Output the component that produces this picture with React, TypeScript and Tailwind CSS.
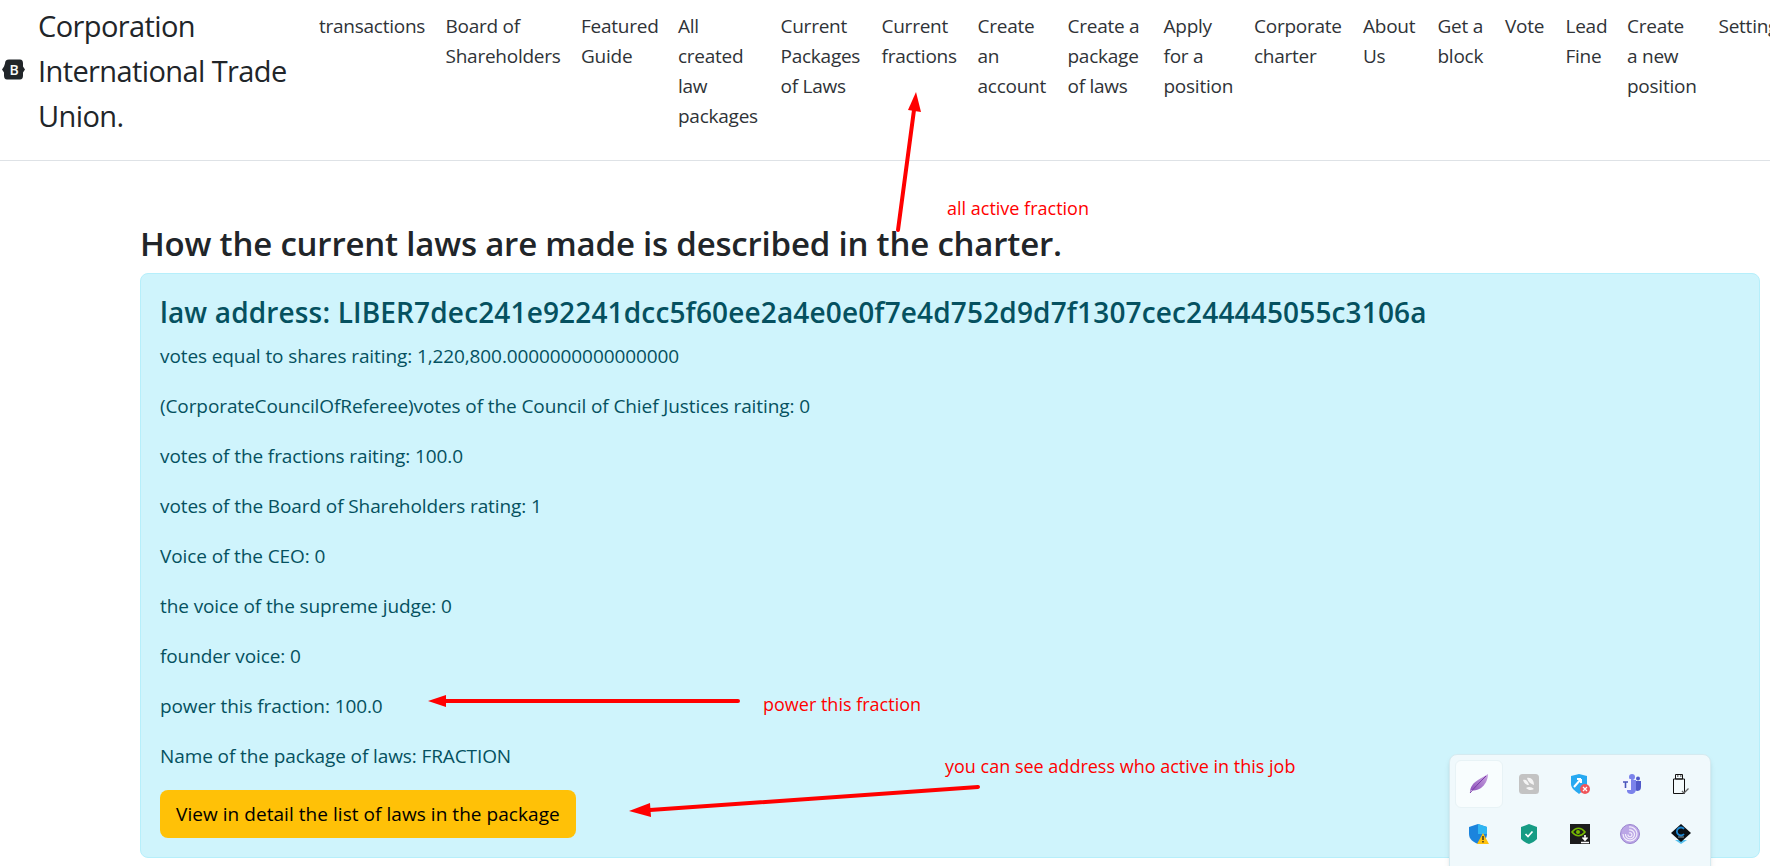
import React from "react";

const navLinks = [
  { lines: ["transactions"], width: "w-[106.5px]" },
  { lines: ["Board of", "Shareholders"], width: "w-[115.5px]" },
  { lines: ["Featured", "Guide"], width: "w-[77px]" },
  { lines: ["All", "created", "law", "packages"], width: "w-[82.5px]" },
  { lines: ["Current", "Packages", "of Laws"], width: "w-[81px]" },
  { lines: ["Current", "fractions"], width: "w-[76px]" },
  { lines: ["Create", "an", "account"], width: "w-[70px]" },
  { lines: ["Create a", "package", "of laws"], width: "w-[76px]" },
  { lines: ["Apply", "for a", "position"], width: "w-[70.5px]" },
  { lines: ["Corporate", "charter"], width: "w-[89px]" },
  { lines: ["About", "Us"], width: "w-[54.5px]" },
  { lines: ["Get a", "block"], width: "w-[47.5px]" },
  { lines: ["Vote"], width: "w-[40.5px]" },
  { lines: ["Lead", "Fine"], width: "w-[41.5px]" },
  { lines: ["Create", "a new", "position"], width: "w-[71.5px]" },
  { lines: ["Settings"], width: "w-[80px]" },
];

const rows = [
  "votes equal to shares raiting: 1,220,800.0000000000000000",
  "(CorporateCouncilOfReferee)votes of the Council of Chief Justices raiting: 0",
  "votes of the fractions raiting: 100.0",
  "votes of the Board of Shareholders rating: 1",
  "Voice of the CEO: 0",
  "the voice of the supreme judge: 0",
  "founder voice: 0",
  "power this fraction: 100.0",
  "Name of the package of laws: FRACTION",
];

function Arrows() {
  return (
    <svg className="absolute left-0 top-0 pointer-events-none" width="1770" height="866">
      <g stroke="#ff0000" strokeWidth="4" strokeLinecap="round">
        <line x1="898" y1="230" x2="914" y2="110" />
        <line x1="738" y1="701" x2="445" y2="701" />
        <line x1="978" y1="787" x2="650" y2="810" />
      </g>
      <g fill="#ff0000">
        <polygon points="916,92 921,112 908,110" />
        <polygon points="428,701 446,695 446,707" />
        <polygon points="629,811 650,803 651,817" />
      </g>
    </svg>
  );
}

function TrayIcons() {
  return (
    <div className="grid grid-cols-5 gap-[2px]">
      <div className="w-12 h-12 flex items-center justify-center rounded-md bg-[#f8fdfe] border border-[#e8f3f6]">
        <svg width="20" height="20" viewBox="0 0 20 20">
          <defs>
            <linearGradient id="feather" x1="0" y1="1" x2="1" y2="0">
              <stop offset="0" stopColor="#8a4bb8" />
              <stop offset="1" stopColor="#c9a6e0" />
            </linearGradient>
          </defs>
          <path d="M1 19 C1 13 4 9 9 6 C12 4 16 2 19 0 C19 6 16 11 12 14 C9 16 5 17 2 16 Z" fill="url(#feather)" />
          <path d="M1 19 C5 14 10 9 17 2" stroke="#7a3aa8" strokeWidth="1" fill="none" />
        </svg>
      </div>
      <div className="w-12 h-12 flex items-center justify-center">
        <svg width="20" height="20" viewBox="0 0 20 20">
          <rect width="20" height="20" rx="3.5" fill="#c3c3c3" />
          <path d="M4 6 C7 5 9 7 10 11 C7 11 5 9 4 6 Z M8 4 C12 3 15 6 15 11 C12 10 9 8 8 4 Z M7 14 C10 12 13 13 15 15 C12 17 9 16 7 14 Z" fill="#f4f4f4" />
        </svg>
      </div>
      <div className="w-12 h-12 flex items-center justify-center">
        <svg width="20" height="20" viewBox="0 0 20 20">
          <path d="M1 2 L9 0 L17 2 V10 C17 14 13 17 9 20 C5 17 1 14 1 10 Z" fill="#27a9f1" />
          <path d="M4 13 L11 5 M11 5 H7 M11 5 V9" stroke="#fff" strokeWidth="2" fill="none" />
          <circle cx="15" cy="15" r="5" fill="#f0565a" />
          <path d="M13 13 L17 17 M17 13 L13 17" stroke="#fff" strokeWidth="1.2" />
        </svg>
      </div>
      <div className="w-12 h-12 flex items-center justify-center">
        <svg width="21" height="20" viewBox="0 0 21 20">
          <circle cx="12" cy="3" r="3" fill="#7b83eb" />
          <circle cx="18" cy="4.5" r="2" fill="#5059c9" />
          <path d="M15 7 H21 V13 C21 16 19 17 17 17 L15 16 Z" fill="#5059c9" />
          <path d="M7 6 H16 V15 C16 18 14 20 11 20 C9 20 7 19 7 17 Z" fill="#7b83eb" />
          <rect x="0" y="5" width="11" height="11" fill="#f5f5ff" />
          <path d="M3 8 H8 M5.5 8 V14" stroke="#4b53bc" strokeWidth="1.6" />
        </svg>
      </div>
      <div className="w-12 h-12 flex items-center justify-center">
        <svg width="16" height="20" viewBox="0 0 16 20">
          <path d="M2.5 0.5 H9.5 V5 H2.5 Z M0.5 5 H11.5 V19.5 H0.5 Z" fill="#f4fbfd" stroke="#111" />
          <path d="M4 2 H5.5 M7 2 H8.5" stroke="#111" />
          <path d="M9 17 L11 19 L15.5 14.5" stroke="#666" strokeWidth="1.3" fill="none" />
        </svg>
      </div>
      <div className="w-12 h-12 flex items-center justify-center">
        <svg width="20" height="20" viewBox="0 0 20 20">
          <path d="M0 3 L9 0 L18 3 V10 C18 15 14 18 9 20 C4 18 0 15 0 10 Z" fill="#1b84dd" />
          <path d="M9 0 L18 3 V10 H9 Z" fill="#2fb6f2" />
          <path d="M14 9 L20 20 H8 Z" fill="#ffc20e" />
          <path d="M14 12 V16 M14 17 V18.5" stroke="#222" strokeWidth="1.3" />
        </svg>
      </div>
      <div className="w-12 h-12 flex items-center justify-center">
        <svg width="16" height="20" viewBox="0 0 16 20">
          <path d="M8 0 L16 3 V15 C14 17 11 19 8 20 C5 19 2 17 0 15 V3 Z" fill="#179c84" />
          <path d="M4.5 10 L7 12.5 L11.5 7.5" stroke="#fff" strokeWidth="1.7" fill="none" />
        </svg>
      </div>
      <div className="w-12 h-12 flex items-center justify-center">
        <svg width="20" height="20" viewBox="0 0 20 20">
          <rect width="20" height="20" fill="#1c1c1c" />
          <path d="M2 8 C6 3 11 3 15 8 C11 13 6 13 2 8 Z" fill="none" stroke="#76b900" strokeWidth="1.6" />
          <circle cx="8" cy="8" r="2" fill="#76b900" />
          <rect x="10" y="12" width="10" height="8" fill="#1c1c1c" />
          <path d="M15 11 V15 M12.5 13.5 L15 16 L17.5 13.5 M11 18.5 H19" stroke="#fff" strokeWidth="1.6" fill="none" />
        </svg>
      </div>
      <div className="w-12 h-12 flex items-center justify-center">
        <svg width="20" height="20" viewBox="0 0 20 20">
          <circle cx="10" cy="10" r="9.5" fill="#bba6e6" stroke="#9a85cf" />
          <path d="M9 3 A7 7 0 1 1 3 10 M9 6 A4.5 4.5 0 1 1 5.5 10 M9 9 A2 2 0 1 1 8 10.5" stroke="#f3effb" strokeWidth="1.2" fill="none" />
        </svg>
      </div>
      <div className="w-12 h-12 flex items-center justify-center">
        <svg width="20" height="20" viewBox="0 0 20 20">
          <path d="M4 16 H16 L10 20 Z" fill="#58c1ee" />
          <path d="M10 0 L20 9 L10 18 L0 9 Z" fill="#0a0f14" />
          <path d="M13 5 A4 4 0 1 0 13 10" fill="none" stroke="#1e88d2" strokeWidth="1.8" />
          <path d="M7 13 H13" stroke="#8a9aa5" strokeWidth="1" />
        </svg>
      </div>
    </div>
  );
}

export default function App() {
  return (
    <div className="relative w-[1770px] h-[866px] overflow-hidden bg-white text-[#212529] font-['Open_Sans',sans-serif]">
      <header className="h-[161px] border-b border-[#dee2e6] flex items-start">
        <div className="flex items-center pt-[3px] shrink-0">
          <svg width="24" height="21" viewBox="0 0 24 20" className="shrink-0 ml-[1px] -mt-[2px]">
            <path d="M4 4 Q4 0 8 0 H19 Q22 0 22 4 V7 L24 10 L22 13 V16 Q22 20 19 20 H6 Q3 20 3 16 V13 L1 10 L3 7 Z" fill="#212529" />
            <text x="13" y="15" textAnchor="middle" fontSize="14" fontWeight="600" fill="#f8f9fa" fontFamily="Open Sans">B</text>
          </svg>
          <div className="ml-[13px] w-[262px] text-[29px] leading-[45px] tracking-[-0.6px]">
            Corporation International Trade Union.
          </div>
        </div>
        <nav className="ml-[19px] flex pt-[11px] gap-[20px]">
          {navLinks.map((link) => (
            <a key={link.lines.join(" ")} className={`${link.width} block whitespace-nowrap text-[19px] leading-[30px] tracking-[-0.25px] text-[#2f3337] shrink-0`}>
              {link.lines.map((line) => (
                <span key={line} className="block">{line}</span>
              ))}
            </a>
          ))}
        </nav>
      </header>
      <main className="pl-[140px] pr-[10px] pt-[64px]">
        <h2 className="text-[33px] leading-[38px] font-semibold tracking-[-0.2px] mb-[10px]">
          How the current laws are made is described in the charter.
        </h2>
        <div className="rounded-lg border border-[#b6effb] bg-[#cff4fc] text-[#055160] px-[19px] pt-[22px] h-[585px]">
          <h4 className="text-[28px] leading-[32px] font-semibold tracking-[0.15px] mb-[13px]">
            law address: LIBER7dec241e92241dcc5f60ee2a4e0e0f7e4d752d9d7f1307cec244445055c3106a
          </h4>
          {rows.map((r) => (
            <p key={r} className="text-[19px] leading-[30px] tracking-[-0.1px] mb-[20px]">
              {r}
            </p>
          ))}
          <button className="bg-[#ffc107] text-black rounded-lg text-[19px] tracking-[0.05px] h-[48px] px-[16px] -mt-[1px] block">
            View in detail the list of laws in the package
          </button>
        </div>
      </main>
      <Arrows />
      <span className="absolute left-[947px] top-[195px] text-[18px] text-[#ff0000]">all active fraction</span>
      <span className="absolute left-[763px] top-[691px] text-[18px] text-[#ff0000]">power this fraction</span>
      <span className="absolute left-[945px] top-[753px] text-[18px] text-[#ff0000]">you can see address who active in this job</span>
      <div className="absolute left-[1449px] top-[754px] w-[262px] h-[130px] rounded-lg bg-[#f0f9fc] border border-[#d5eaf0] shadow-md px-[5px] pt-[5px]">
        <TrayIcons />
      </div>
    </div>
  );
}
